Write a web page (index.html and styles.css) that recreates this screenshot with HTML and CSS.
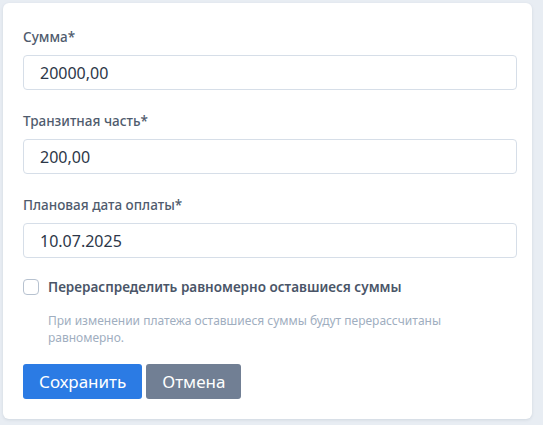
FILE: index.html
```html
<!DOCTYPE html>
<html lang="ru">
<head>
<meta charset="UTF-8">
<meta name="viewport" content="width=device-width, initial-scale=1.0">
<title>Платёж</title>
<link rel="stylesheet" href="styles.css">
</head>
<body>

<form class="card">
  <div class="field">
    <label for="sum">Сумма*</label>
    <input type="text" id="sum" value="20000,00">
  </div>

  <div class="field">
    <label for="transit">Транзитная часть*</label>
    <input type="text" id="transit" value="200,00">
  </div>

  <div class="field">
    <label for="date">Плановая дата оплаты*</label>
    <input type="text" id="date" value="10.07.2025">
  </div>

  <label class="check">
    <input type="checkbox" id="redistribute">
    <span>Перераспределить равномерно оставшиеся суммы</span>
  </label>
  <p class="hint">При изменении платежа оставшиеся суммы будут перерассчитаны равномерно.</p>

  <div class="actions">
    <button type="button" class="btn btn-primary">Сохранить</button>
    <button type="button" class="btn btn-secondary">Отмена</button>
  </div>
</form>

</body>
</html>
```

FILE: styles.css
```css
body {
  margin: 0;
  padding: 3px 11px 6px 3px;
  background: #e8edf3;
  font-family: "Noto Sans", "Open Sans", sans-serif;
}

.card {
  background: #ffffff;
  border-radius: 6px;
  box-shadow: 0 1px 3px rgba(100, 116, 139, 0.18);
  padding: 25px 15px 20px 20px;
  height: 416px;
  box-sizing: border-box;
}

.field {
  margin-bottom: 22px;
}

.field:nth-of-type(3) {
  margin-bottom: 20px;
}

.field label {
  display: block;
  font-size: 13.5px;
  line-height: 18px;
  font-weight: 500;
  color: #4f5b6d;
  margin-bottom: 9px;
}

.field input {
  display: block;
  width: 100%;
  box-sizing: border-box;
  height: 35px;
  padding: 0 16px;
  border: 1px solid #d6dee8;
  border-radius: 4px;
  font-family: inherit;
  font-size: 16px;
  color: #2d3748;
  background: #fff;
}

.check {
  display: flex;
  align-items: center;
  gap: 9px;
  font-size: 13.5px;
  line-height: 18px;
  font-weight: 600;
  color: #4a5568;
}

.check input {
  appearance: none;
  margin: 0;
  width: 16px;
  height: 16px;
  border: 1px solid #b7c2d0;
  border-radius: 4px;
  background: #fff;
}

.hint {
  margin: 16px 0 18px 25px;
  font-size: 12px;
  line-height: 17px;
  color: #a0aec0;
}

.actions {
  display: flex;
  gap: 4px;
}

.btn {
  height: 35px;
  padding: 0 16px;
  border: none;
  border-radius: 3px;
  font-family: inherit;
  font-size: 17px;
  color: #fff;
  cursor: pointer;
}

.btn-primary {
  background: #2b7be4;
}

.btn-secondary {
  background: #717f94;
}
```
